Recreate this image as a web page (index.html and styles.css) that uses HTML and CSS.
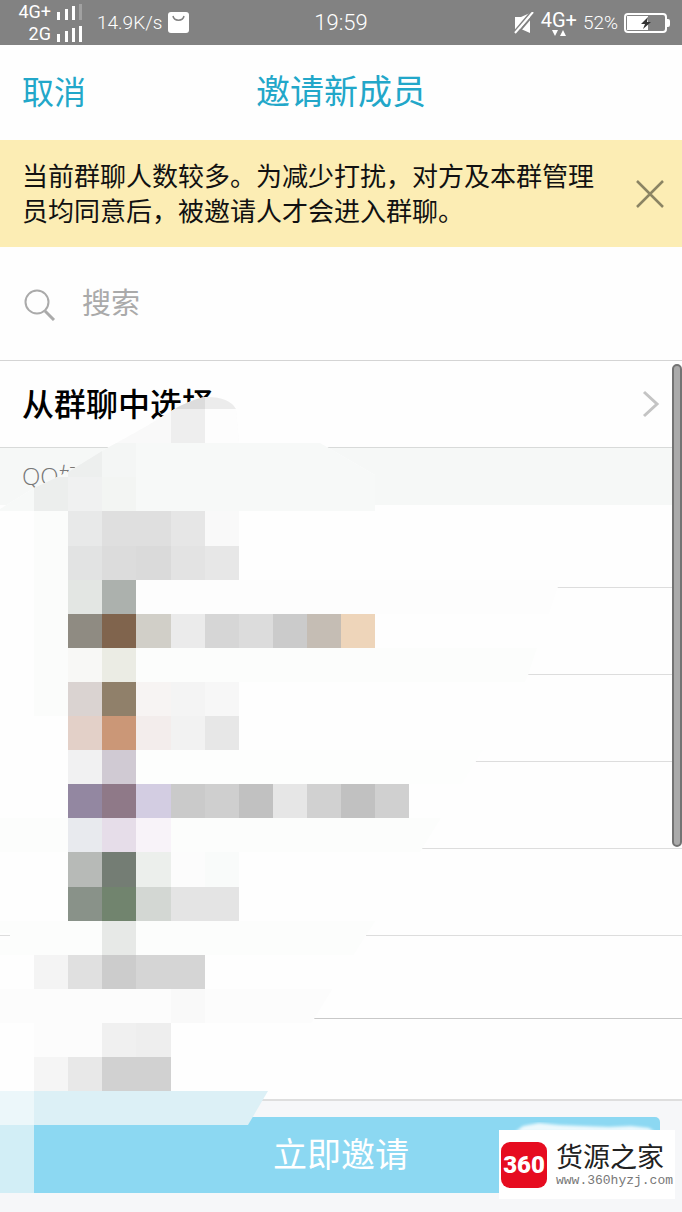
FILE: index.html
```html
<!DOCTYPE html>
<html lang="zh-CN">
<head>
<meta charset="utf-8">
<meta name="viewport" content="width=device-width, initial-scale=1">
<title>邀请新成员</title>
<link rel="stylesheet" href="styles.css">
</head>
<body>
<div class="screen">
  <div class="status">
    <div class="status-side">
      <div class="signals">
        <div class="signal"><span>4G+</span>
          <svg width="26" height="16" viewBox="0 0 26 16" fill="#fff"><path d="M0 8h3v8H0zM8 5h3v11H8zM15 2h3v14h-3z"/><path d="M22 0h3v16h-3z" opacity=".25"/></svg>
        </div>
        <div class="signal"><span>2G</span>
          <svg width="26" height="16" viewBox="0 0 26 16" fill="#fff"><path d="M0 8h3v8H0zM8 5h3v11H8zM15 2h3v14h-3zM22 0h3v16h-3z"/></svg>
        </div>
      </div>
      <span class="speed">14.9K/s</span>
      <svg width="21" height="21" viewBox="0 0 21 21"><rect width="21" height="21" rx="3" fill="#fff"/><path d="M5 4c1 5.500 10 5.500 11 0" fill="none" stroke="#828282" stroke-width="1.500"/></svg>
    </div>
    <time class="clock">19:59</time>
    <div class="status-side status-end">
      <svg width="21" height="22" viewBox="0 0 21 22"><path d="M1 5h6l9-4v20l-9-4H1z" fill="#fff"/><path d="M0 20 17 0" stroke="#828282" stroke-width="2"/><path d="M3 22 21 1" stroke="#828282" stroke-width="2"/><path d="M1 21 19 0" stroke="#fff" stroke-width="2"/></svg>
      <div class="network"><span>4G+</span>
        <svg width="16" height="6" viewBox="0 0 16 6" fill="#fff"><path d="M1 0h6L4 6zM9 6h6l-3-6z"/></svg>
      </div>
      <span class="percent">52%</span>
      <svg width="46" height="20" viewBox="0 0 46 20"><rect x="1" y="1" width="41" height="18" rx="3" fill="none" stroke="#fff" stroke-width="2"/><path d="M3 3h21v14H3zM43 6h1q2 0 2 2v4q0 2-2 2h-1z" fill="#fff"/><path d="m24 4-7 7h4l-2 5 8-7h-4z" fill="#333"/></svg>
    </div>
  </div>

  <header class="topbar">
    <button class="cancel" type="button">取消</button>
    <h1 class="title">邀请新成员</h1>
  </header>

  <section class="notice">
    <p class="notice-text">当前群聊人数较多。为减少打扰，对方及本群管理员均同意后，被邀请人才会进入群聊。</p>
    <button class="close" type="button" aria-label="关闭">
      <svg width="28" height="28" viewBox="0 0 28 28"><path d="M1 1 27 27M27 1 1 27" stroke="#8b8463" stroke-width="2.500"/></svg>
    </button>
  </section>

  <label class="search">
    <svg width="32" height="32" viewBox="0 0 32 32" fill="none" stroke="#aaa"><circle cx="13" cy="13" r="11.500" stroke-width="2"/><path d="m21 22 9 9" stroke-width="3"/></svg>
    <input class="search-input" type="search" placeholder="搜索" aria-label="搜索">
  </label>

  <main class="list">
    <a class="group-link" href="#">
      <span class="group-label">从群聊中选择</span>
      <svg width="18" height="28" viewBox="0 0 18 28"><path d="M2 2 15 14 2 26" fill="none" stroke="#c4c4c4" stroke-width="3"/></svg>
    </a>
    <h2 class="section">QQ好友</h2>
    <ul class="friends">
      <li class="friend"></li>
      <li class="friend"></li>
      <li class="friend"></li>
      <li class="friend"></li>
      <li class="friend"></li>
      <li class="friend"></li>
      <li class="friend"></li>
    </ul>
    <div class="scrollbar"></div>
  </main>

  <footer class="footer">
    <button class="invite" type="button">立即邀请</button>
  </footer>

  <svg class="mosaic" width="682" height="1193" viewBox="0 0 682 1193" aria-hidden="true">
    <defs>
      <clipPath id="brush"><path d="M0 509 34 488 68 472 102 451 145 427 178 407Q198 397 207 397Q229 397 236 409L239 443H320L375 475V511L560 580 527 678 420 852 363 940 312 1022 268 1091H0V940H10V933H0z"/></clipPath>
    </defs>
    <g clip-path="url(#brush)">
      <path d="M0 390H682V1091H0z" fill="#fefefe"/>
      <g transform="scale(34.100)" shape-rendering="crispEdges">
        <rect x="0" y="11" width="7" height="2" fill="#f9f9f9"/><rect x="5" y="11" width="1" height="1" fill="#dcdcdc"/><rect x="6" y="11" width="1" height="1" fill="#ececec"/>
        <rect x="5" y="12" width="1" height="1" fill="#eee"/><rect x="6" y="12" width="1" height="1" fill="#fdfdfd"/>
        <rect x="0" y="13" width="11" height="2" fill="#f7f9f8"/><rect x="2" y="13" width="1" height="1" fill="#edefee"/><rect x="3" y="13" width="1" height="1" fill="#f4f6f5"/>
        <rect x="1" y="14" width="1" height="1" fill="#eceeed"/><rect x="2" y="14" width="1" height="1" fill="#f0f1f1"/><rect x="3" y="14" width="1" height="1" fill="#f3f5f3"/>
        <rect x="1" y="15" width="1" height="6" fill="#fbfcfb"/>
        <rect x="2" y="15" width="1" height="1" fill="#e8e9e9"/><rect x="3" y="15" width="2" height="1" fill="#dfdfdf"/><rect x="5" y="15" width="1" height="1" fill="#e6e6e6"/><rect x="6" y="15" width="1" height="1" fill="#f9f9f9"/>
        <rect x="2" y="16" width="1" height="1" fill="#e2e3e3"/><rect x="3" y="16" width="1" height="1" fill="#dcdcdc"/><rect x="4" y="16" width="1" height="1" fill="#dadada"/><rect x="5" y="16" width="1" height="1" fill="#e3e3e3"/><rect x="6" y="16" width="1" height="1" fill="#e7e7e7"/>
        <rect x="4" y="17" width="13" height="1" fill="#fdfdfd"/><rect x="2" y="17" width="1" height="1" fill="#e3e6e3"/><rect x="3" y="17" width="1" height="1" fill="#acb1ad"/>
        <rect x="2" y="18" width="1" height="1" fill="#8f8b82"/><rect x="3" y="18" width="1" height="1" fill="#80644d"/><rect x="4" y="18" width="1" height="1" fill="#d1cfc8"/><rect x="5" y="18" width="1" height="1" fill="#ebebeb"/><rect x="6" y="18" width="1" height="1" fill="#d6d6d6"/><rect x="7" y="18" width="1" height="1" fill="#dcdcdc"/><rect x="8" y="18" width="1" height="1" fill="#cbcbcb"/><rect x="9" y="18" width="1" height="1" fill="#c5bdb4"/><rect x="10" y="18" width="1" height="1" fill="#eed5ba"/>
        <rect x="4" y="19" width="13" height="1" fill="#fcfdfc"/><rect x="2" y="19" width="1" height="1" fill="#f8f8f6"/><rect x="3" y="19" width="1" height="1" fill="#ebece4"/>
        <rect x="2" y="20" width="1" height="1" fill="#dad3d1"/><rect x="3" y="20" width="1" height="1" fill="#90806a"/><rect x="4" y="20" width="1" height="1" fill="#f7f4f3"/><rect x="5" y="20" width="1" height="1" fill="#f4f4f4"/><rect x="6" y="20" width="1" height="1" fill="#f7f7f7"/>
        <rect x="2" y="21" width="1" height="1" fill="#e3d0c8"/><rect x="3" y="21" width="1" height="1" fill="#cb9777"/><rect x="4" y="21" width="1" height="1" fill="#f3edec"/><rect x="5" y="21" width="1" height="1" fill="#f2f2f2"/><rect x="6" y="21" width="1" height="1" fill="#e7e7e7"/>
        <rect x="4" y="22" width="11" height="1" fill="#fdfefd"/><rect x="2" y="22" width="1" height="1" fill="#f1f1f2"/><rect x="3" y="22" width="1" height="1" fill="#d0cad3"/>
        <rect x="2" y="23" width="1" height="1" fill="#9387a1"/><rect x="3" y="23" width="1" height="1" fill="#8f7988"/><rect x="4" y="23" width="1" height="1" fill="#d3cde2"/><rect x="5" y="23" width="1" height="1" fill="#cacaca"/><rect x="6" y="23" width="1" height="1" fill="#cfcfcf"/><rect x="7" y="23" width="1" height="1" fill="#c1c1c1"/><rect x="8" y="23" width="1" height="1" fill="#e6e6e6"/><rect x="9" y="23" width="1" height="1" fill="#d1d1d1"/><rect x="10" y="23" width="1" height="1" fill="#c1c1c1"/><rect x="11" y="23" width="1" height="1" fill="#d0d0d0"/>
        <rect x="0" y="24" width="13" height="1" fill="#fcfdfc"/><rect x="2" y="24" width="1" height="1" fill="#e8eaee"/><rect x="3" y="24" width="1" height="1" fill="#e6dde9"/><rect x="4" y="24" width="1" height="1" fill="#f8f3f9"/>
        <rect x="2" y="25" width="1" height="1" fill="#b7bab7"/><rect x="3" y="25" width="1" height="1" fill="#747d74"/><rect x="4" y="25" width="1" height="1" fill="#ecefec"/><rect x="5" y="25" width="1" height="1" fill="#fcfcfc"/><rect x="6" y="25" width="1" height="1" fill="#f9fbfa"/>
        <rect x="2" y="26" width="1" height="1" fill="#899289"/><rect x="3" y="26" width="1" height="1" fill="#71846e"/><rect x="4" y="26" width="1" height="1" fill="#d3d7d3"/><rect x="5" y="26" width="2" height="1" fill="#e4e4e4"/>
        <rect x="0" y="27" width="11" height="1" fill="#fcfdfc"/><rect x="3" y="27" width="1" height="1" fill="#e7e9e7"/>
        <rect x="1" y="28" width="1" height="1" fill="#f4f4f4"/><rect x="2" y="28" width="1" height="1" fill="#e0e0e0"/><rect x="3" y="28" width="1" height="1" fill="#ccc"/><rect x="4" y="28" width="2" height="1" fill="#d5d5d5"/>
        <rect x="0" y="29" width="10" height="1" fill="#fcfcfc"/><rect x="5" y="29" width="1" height="1" fill="#f9f9f9"/>
        <rect x="1" y="30" width="2" height="1" fill="#fcfcfc"/><rect x="3" y="30" width="1" height="1" fill="#f0f0f0"/><rect x="4" y="30" width="1" height="1" fill="#eee"/>
        <rect x="1" y="31" width="1" height="1" fill="#f5f5f5"/><rect x="2" y="31" width="1" height="1" fill="#e8e8e8"/><rect x="3" y="31" width="2" height="1" fill="#d1d1d1"/>
      </g>
    </g>
    <path d="M0 1091H268L248 1125H0z" fill="#dcf0f6"/>
    <path d="M0 1091H34V1125H0z" fill="#ecf7fa"/>
    <path d="M0 1125H34V1193H0z" fill="#d2eef6"/>
  </svg>

  <div class="brand">
    <svg class="brand-haze" width="150" height="16" viewBox="0 0 150 16">
      <defs><filter id="soft"><feGaussianBlur stdDeviation="1.500"/></filter></defs>
      <path d="M2 18 10 12 26 9 46 11 70 12 96 13 118 12 136 14 142 18z" fill="#fff" opacity=".85" filter="url(#soft)"/>
    </svg>
    <span class="brand-logo">360</span>
    <div class="brand-words">
      <span class="brand-name">货源之家</span>
      <span class="brand-url">www.360hyzj.com</span>
    </div>
  </div>
</div>
</body>
</html>
```
FILE: styles.css
```css
* { box-sizing: border-box; }

body {
  margin: 0;
  background: #fefefe;
  color: #111;
  font-family: "Open Sans", "Noto Sans CJK SC", sans-serif;
}

button {
  margin: 0;
  padding: 0;
  border: 0;
  background: none;
  font: inherit;
  cursor: pointer;
}

svg { display: block; flex: none; }

.screen {
  position: relative;
  display: flex;
  flex-direction: column;
  min-height: 100vh;
  overflow: hidden;
}

.status {
  display: grid;
  grid-template-columns: 1fr auto 1fr;
  align-items: center;
  height: 45px;
  padding: 0 12px;
  background: #828282;
  color: #fff;
  font-family: Roboto, sans-serif;
}

.status-side { display: flex; align-items: center; gap: 6px; }
.status-end { justify-content: flex-end; }

.signals {
  display: flex;
  flex-direction: column;
  align-items: flex-end;
  width: 71px;
  margin-right: 8px;
}

.signal {
  display: flex;
  align-items: center;
  gap: 6px;
  font-size: 18px;
  line-height: 22px;
}

.speed, .percent { font-size: 19px; font-weight: 300; }
.clock { font-size: 22px; font-weight: 300; }

.network {
  display: flex;
  flex-direction: column;
  align-items: center;
  font-size: 20px;
  line-height: 20px;
}

.topbar {
  display: grid;
  grid-template-columns: 1fr auto 1fr;
  align-items: center;
  height: 95px;
  padding: 0 22px 6px;
  color: #22a7c9;
}

.cancel { justify-self: start; color: #22a7c9; font-size: 32px; }
.title { margin: 0; font-size: 34px; font-weight: 400; }

.notice {
  display: flex;
  align-items: center;
  justify-content: space-between;
  gap: 16px;
  height: 107px;
  padding: 0 18px 0 22px;
  background: #fcedb4;
}

.notice-text { margin: 0; max-width: 584px; font-size: 26px; line-height: 35px; }

.search {
  display: flex;
  align-items: center;
  gap: 26px;
  height: 113px;
  padding: 2px 24px 0;
}

.search-input {
  flex: 1;
  min-width: 0;
  padding: 0 0 4px;
  border: 0;
  outline: 0;
  background: none;
  font: inherit;
  font-size: 29px;
}

.search-input::placeholder { color: #aaa; }

.list { position: relative; flex: 1; border-top: 1px solid #d4d4d4; }

.group-link {
  display: flex;
  align-items: center;
  justify-content: space-between;
  height: 87px;
  padding: 0 22px;
  border-bottom: 1px solid #d8dad9;
  color: #000;
  font-size: 32px;
  font-weight: 500;
  text-decoration: none;
}

.group-label { padding-bottom: 4px; }

.section {
  height: 57px;
  margin: 0;
  padding: 0 22px;
  background: #f6f8f7;
  color: #777;
  font-size: 24px;
  font-weight: 300;
  line-height: 56px;
}

.friends { margin: 0; padding: 0; list-style: none; }
.friend { height: 87px; border-bottom: 1px solid #ddd; }
.friend:first-child { height: 83px; }
.friend:nth-child(6) { height: 83px; border-color: #c8c8c8; }
.friend:last-child { height: 79px; border: 0; }

.scrollbar {
  position: absolute;
  top: 3px;
  right: 0;
  width: 10px;
  height: 483px;
  border: 2px solid #737373;
  border-radius: 5px;
  background: #aaa;
}

.footer { height: 113px; padding: 16px 22px 0; border-top: 2px solid #dedede; background: #f6f7f9; }

.invite {
  width: 100%;
  height: 76px;
  padding-bottom: 6px;
  border-radius: 5px;
  background: #8cd8f2;
  color: #fff;
  font-size: 34px;
}

.mosaic { position: absolute; top: 0; left: 0; pointer-events: none; }

.brand {
  position: absolute;
  right: 7px;
  bottom: 13px;
  display: flex;
  align-items: center;
  gap: 9px;
  width: 176px;
  height: 69px;
  padding-left: 2px;
  background: #fff;
}

.brand-haze { position: absolute; left: 14px; bottom: 100%; }

.brand-logo {
  width: 46px;
  height: 46px;
  border-radius: 9px;
  background: #e60c20;
  color: #fff;
  font: 900 24px/46px Roboto, sans-serif;
  text-align: center;
}

.brand-words { display: flex; flex-direction: column; }
.brand-name { color: #222; font-size: 27px; line-height: 32px; }
.brand-url { color: #777; font: 13px/16px "Liberation Mono", monospace; }
```
